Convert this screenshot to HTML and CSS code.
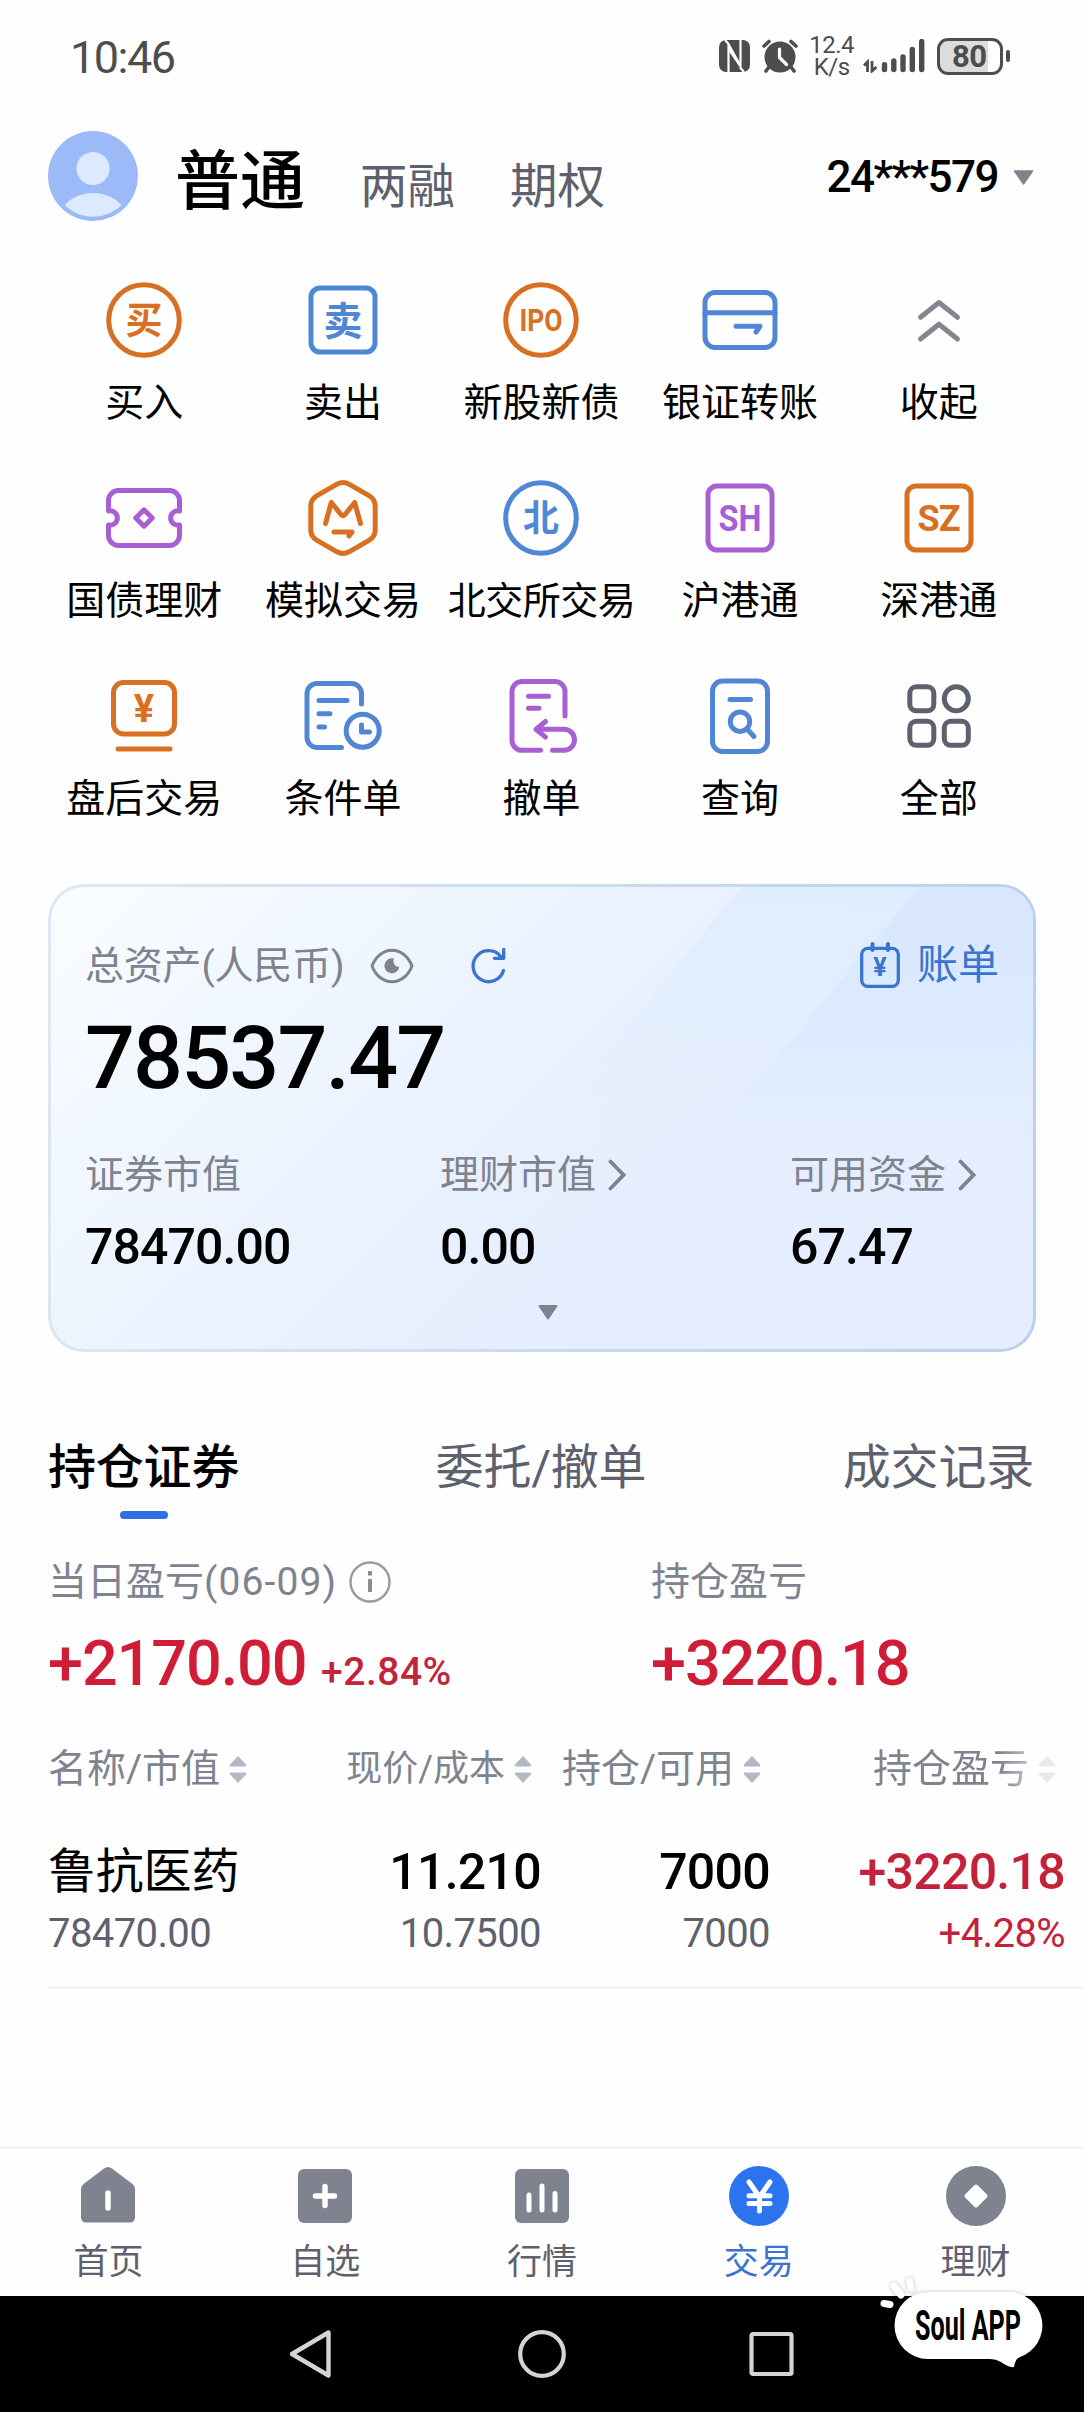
FILE: index.html
```html
<!DOCTYPE html>
<html lang="zh-CN">
<head>
  <meta charset="UTF-8" />
  <meta name="viewport" content="width=device-width, initial-scale=1.0"/>
  <title>交易</title>
  <link rel="stylesheet" href="styles.css">
</head>
<body>

  <div class="status-bar">
    <div class="clock">10:46</div>
    <div class="status-icons">
      <svg class="nfc" width="31" height="32" viewBox="0 0 31 32">
        <rect width="31" height="32" rx="7" fill="#4d4d4d"/>
        <path d="M9.500 32V4L21.500 26V9M6 0L10 4.500M21.500 0V28L25 32" fill="none" stroke="#fff" stroke-width="2.200"/>
        <path d="M10 9L21 25" stroke="#fff" stroke-width="3"/>
      </svg>
      <svg class="alarm" width="36" height="34" viewBox="0 0 36 34">
        <circle cx="18" cy="18" r="15.500" fill="#4d4d4d"/>
        <path d="M2 7L7 2.500M34 7L29 2.500M7 28L4 32M29 28L32 32" stroke="#4d4d4d" stroke-width="3.600" stroke-linecap="round"/>
        <path d="M17.500 10V18.500L24.500 25.500" fill="none" stroke="#fff" stroke-width="3.200" stroke-linecap="round"/>
      </svg>
      <div class="speed"><span>12.4</span><span>K/s</span></div>
      <svg class="signal" width="62" height="34" viewBox="0 0 62 34">
        <path d="M1 26.500L4.500 23V33M9 22V32L13.500 28" fill="none" stroke="#4d4d4d" stroke-width="2.800"/>
        <path d="M21.500 25.800V30.500M30.800 22V30.500M40 18V30.500M49.300 10.500V30.500M58.700 2.500V30.500" stroke="#4d4d4d" stroke-width="5.400" stroke-linecap="round"/>
      </svg>
      <div class="battery"><span>80</span></div>
      <div class="battery-tip"></div>
    </div>
  </div>

  <div class="header">
    <svg class="avatar" width="90" height="90" viewBox="0 0 90 90">
      <circle cx="45" cy="45" r="45" fill="#9bbaf7"/>
      <circle cx="45" cy="37.500" r="16.600" fill="#dce9fe"/>
      <path d="M16.500 74C31 58 59 58 73.500 74C58 89.500 32 89.500 16.500 74Z" fill="#dce9fe"/>
    </svg>
    <div class="account-type active">普通</div>
    <div class="account-type">两融</div>
    <div class="account-type">期权</div>
    <div class="account-no">24***579
      <svg width="21" height="15" viewBox="0 0 21 15"><path d="M1.500 1H19.500L10.500 14Z" fill="#7f8390" stroke="#7f8390" stroke-width="1.500" stroke-linejoin="round"/></svg>
    </div>
  </div>

  <div class="menu">
    <div class="menu-item">
      <svg class="icon orange" viewBox="0 0 80 80"><circle cx="40" cy="40" r="35.300"/><text x="40" y="54" font-size="37">买</text></svg>
      <span>买入</span>
    </div>
    <div class="menu-item">
      <svg class="icon blue" viewBox="0 0 80 80"><rect x="8" y="8" width="64" height="64" rx="9"/><text x="40" y="55" font-size="39">卖</text></svg>
      <span>卖出</span>
    </div>
    <div class="menu-item">
      <svg class="icon orange" viewBox="0 0 80 80"><circle cx="40" cy="40" r="35.300"/><text x="40" y="51" font-size="31" textLength="43" lengthAdjust="spacingAndGlyphs">IPO</text></svg>
      <span>新股新债</span>
    </div>
    <div class="menu-item">
      <svg class="icon blue" viewBox="0 0 80 80"><rect x="5" y="12.500" width="70" height="55" rx="10"/><path d="M5 32.700H75M36 46.300H60L56 52"/></svg>
      <span>银证转账</span>
    </div>
    <div class="menu-item">
      <svg class="icon gray" viewBox="0 0 80 80"><path d="M21.500 37.300L40 22.500L58.500 37.300M21.500 59L40 44.200L58.500 59"/></svg>
      <span>收起</span>
    </div>

    <div class="menu-item">
      <svg class="icon purple" viewBox="0 0 80 80"><path d="M4.500 33V22.500a10 10 0 0 1 10-10h51a10 10 0 0 1 10 10V33a7.200 7.200 0 1 0 0 14V57.500a10 10 0 0 1-10 10h-51a10 10 0 0 1-10-10V47a7.200 7.200 0 1 0 0-14ZM40 31.800L48.200 40L40 48.200L31.800 40Z"/></svg>
      <span>国债理财</span>
    </div>
    <div class="menu-item">
      <svg class="icon orange" viewBox="0 0 80 80"><path d="M34 6.200Q40 3 46 6.200L66 17.600Q72.200 21.300 72.200 28V52Q72.200 58.700 66 62.400L46 73.800Q40 77 34 73.800L14 62.400Q7.800 58.700 7.800 52V28Q7.800 21.300 14 17.600ZM22.500 45.500L28.300 24.500L38 36.500Q40 38.500 42 36.500L51.700 24.500L57.500 45.500M31 54H49L46 58"/></svg>
      <span>模拟交易</span>
    </div>
    <div class="menu-item">
      <svg class="icon blue" viewBox="0 0 80 80"><circle cx="40" cy="40" r="35.300"/><text x="40" y="53" font-size="36">北</text></svg>
      <span class="tight">北交所交易</span>
    </div>
    <div class="menu-item">
      <svg class="icon purple" viewBox="0 0 80 80"><rect x="8" y="8" width="64" height="64" rx="9"/><text x="40" y="53" font-size="36" textLength="43" lengthAdjust="spacingAndGlyphs">SH</text></svg>
      <span>沪港通</span>
    </div>
    <div class="menu-item">
      <svg class="icon orange" viewBox="0 0 80 80"><rect x="8" y="8" width="64" height="64" rx="9"/><text x="40" y="53" font-size="36" textLength="43">SZ</text></svg>
      <span>深港通</span>
    </div>

    <div class="menu-item">
      <svg class="icon orange" viewBox="0 0 80 80"><rect x="9.500" y="6.500" width="61" height="51.500" rx="10"/><path d="M14 73H66"/><text x="40" y="46" font-size="38">¥</text></svg>
      <span>盘后交易</span>
    </div>
    <div class="menu-item">
      <svg class="icon blue" viewBox="0 0 80 80"><path d="M38.500 71.500H14a10 10 0 0 1-10-10V17.500a10 10 0 0 1 10-10H48.500a10 10 0 0 1 10 10V28M16 24.500H44M16 37.700H27M16 51H21.500M58.500 49V56H66.500"/><circle cx="59.700" cy="54.700" r="16.500"/></svg>
      <span>条件单</span>
    </div>
    <div class="menu-item">
      <svg class="icon purple" viewBox="0 0 80 80"><path d="M39.500 74.300H21a10 10 0 0 1-10-10V15.500a10 10 0 0 1 10-10H54a10 10 0 0 1 10 10V40M27.500 20.300H47.500M27.500 32.300H38M44.500 45.500L35 53.300L44.500 61.200M35 53.300H63a10.500 10.500 0 0 1 0 21H51.500"/></svg>
      <span>撤单</span>
    </div>
    <div class="menu-item">
      <svg class="icon blue" viewBox="0 0 80 80"><rect x="12.500" y="5" width="55" height="70.500" rx="10"/><path d="M30 23.500H50.500M47 53L54 60.500"/><circle cx="40" cy="45.700" r="9.700"/></svg>
      <span>查询</span>
    </div>
    <div class="menu-item">
      <svg class="icon dark" viewBox="0 0 80 80"><rect x="10.800" y="10.800" width="24" height="24" rx="6.500"/><circle cx="57.300" cy="22.800" r="12"/><rect x="10.800" y="45.300" width="24" height="24" rx="6.500"/><rect x="45.300" y="45.300" width="24" height="24" rx="6.500"/></svg>
      <span>全部</span>
    </div>
  </div>

  <div class="asset-card">
    <div class="asset-top">
      <span class="label">总资产(人民币)</span>
      <svg class="eye" width="44" height="36" viewBox="0 0 44 36">
        <path d="M2 18C10 -3 34 -3 42 18C34 39 10 39 2 18Z" fill="none" stroke="#7f8390" stroke-width="3"/>
        <path d="M24 10.500A7.500 7.500 0 1 0 29.300 19A6 6 0 0 1 24 10.500Z" fill="#7f8390"/>
      </svg>
      <svg class="refresh" width="35" height="36" viewBox="0 0 35 36">
        <path d="M32.500 22.500A15.500 15.500 0 1 1 30.500 9.500M32.700 1.500V10.300H23.500" fill="none" stroke="#3a74cf" stroke-width="3.300" stroke-linecap="round" stroke-linejoin="round"/>
      </svg>
      <div class="bill">
        <svg width="40" height="46" viewBox="0 0 40 46">
          <path d="M12.500 2V8M28 2V8" stroke="#3a74cf" stroke-width="4" stroke-linecap="round"/>
          <rect x="1.700" y="6.300" width="36.600" height="38" rx="6" fill="none" stroke="#3a74cf" stroke-width="3.300"/>
          <text x="20" y="33.500" font-size="25" fill="#2f6cd6">¥</text>
        </svg>
        账单
      </div>
    </div>
    <div class="asset-total">78537.47</div>
    <div class="asset-cols">
      <div class="asset-col">
        <div class="label">证券市值</div>
        <div class="value">78470.00</div>
      </div>
      <div class="asset-col">
        <div class="label">理财市值 <svg width="18" height="32" viewBox="0 0 18 32"><path d="M2.500 2.500L15.500 16L2.500 29.500" fill="none" stroke="#7f8390" stroke-width="3.800" stroke-linecap="round"/></svg></div>
        <div class="value">0.00</div>
      </div>
      <div class="asset-col">
        <div class="label">可用资金 <svg width="18" height="32" viewBox="0 0 18 32"><path d="M2.500 2.500L15.500 16L2.500 29.500" fill="none" stroke="#7f8390" stroke-width="3.800" stroke-linecap="round"/></svg></div>
        <div class="value">67.47</div>
      </div>
    </div>
    <svg class="expand" width="20" height="15" viewBox="0 0 20 15"><path d="M1.500 1H18.500L10 13.500Z" fill="#7f8390" stroke="#7f8390" stroke-width="2" stroke-linejoin="round"/></svg>
  </div>

  <div class="tabs">
    <div class="tab active">持仓证券</div>
    <div class="tab">委托/撤单</div>
    <div class="tab">成交记录</div>
  </div>

  <div class="profit">
    <div class="profit-col">
      <div class="label"><span>当日盈亏<span class="date">(06-09)</span></span>
        <svg width="42" height="42" viewBox="0 0 42 42"><circle cx="21" cy="21" r="19.500" fill="none" stroke="#9a9a9e" stroke-width="2.400"/><path d="M21 10V14.500M21 18V31" stroke="#8a8d96" stroke-width="4"/></svg>
      </div>
      <div class="amount">+2170.00 <small>+2.84%</small></div>
    </div>
    <div class="profit-col">
      <div class="label">持仓盈亏</div>
      <div class="amount">+3220.18</div>
    </div>
  </div>

  <div class="holdings">
    <div class="holdings-head">
      <div>名称/市值<svg class="sort" viewBox="0 0 18 29"><path d="M9 1L17 9.500Q18 11.500 16 11.500H2Q0 11.500 1 9.500ZM9 28L17 19.500Q18 17.500 16 17.500H2Q0 17.500 1 19.500Z"/></svg></div>
      <div class="small">现价/成本<svg class="sort" viewBox="0 0 18 29"><path d="M9 1L17 9.500Q18 11.500 16 11.500H2Q0 11.500 1 9.500ZM9 28L17 19.500Q18 17.500 16 17.500H2Q0 17.500 1 19.500Z"/></svg></div>
      <div>持仓/可用<svg class="sort" viewBox="0 0 18 29"><path d="M9 1L17 9.500Q18 11.500 16 11.500H2Q0 11.500 1 9.500ZM9 28L17 19.500Q18 17.500 16 17.500H2Q0 17.500 1 19.500Z"/></svg></div>
      <div class="fade">持仓盈亏<svg class="sort" viewBox="0 0 18 29"><path d="M9 1L17 9.500Q18 11.500 16 11.500H2Q0 11.500 1 9.500ZM9 28L17 19.500Q18 17.500 16 17.500H2Q0 17.500 1 19.500Z"/></svg></div>
    </div>
    <div class="holdings-row">
      <div><p class="name">鲁抗医药</p><p class="sub">78470.00</p></div>
      <div><p>11.210</p><p class="sub">10.7500</p></div>
      <div><p>7000</p><p class="sub">7000</p></div>
      <div class="up"><p>+3220.18</p><p class="sub">+4.28%</p></div>
    </div>
  </div>

  <div class="tab-bar">
    <div class="tab-bar-item">
      <svg viewBox="0 0 60 60"><path d="M26 2.500Q30 -0.500 34 2.500L54.500 18Q57 20 57 23V51Q57 56.500 51.500 56.500H8.500Q3 56.500 3 51V23Q3 20 5.500 18Z" fill="#7f8390"/><path d="M30 27V42" stroke="#fff" stroke-width="5.500" stroke-linecap="round"/></svg>
      <span>首页</span>
    </div>
    <div class="tab-bar-item">
      <svg viewBox="0 0 60 60"><rect x="3" y="3" width="54" height="54" rx="6" fill="#7f8390"/><path d="M30 20.500V39.500M20.500 30H39.500" stroke="#fff" stroke-width="5.500" stroke-linecap="round"/></svg>
      <span>自选</span>
    </div>
    <div class="tab-bar-item">
      <svg viewBox="0 0 60 60"><rect x="3" y="3" width="54" height="54" rx="6" fill="#7f8390"/><path d="M17 29V44M30 20V44M43 27.500V44" stroke="#fff" stroke-width="5" stroke-linecap="round"/></svg>
      <span>行情</span>
    </div>
    <div class="tab-bar-item active">
      <svg viewBox="0 0 60 60"><circle cx="30" cy="30" r="30" fill="#2c74ee"/><path d="M20 16L30.500 31L41 16M30.500 31V45M20 29.700H41M20 37.500H41" fill="none" stroke="#fff" stroke-width="5" stroke-linecap="round" stroke-linejoin="round"/></svg>
      <span>交易</span>
    </div>
    <div class="tab-bar-item">
      <svg viewBox="0 0 60 60"><circle cx="30" cy="30" r="30" fill="#7f8390"/><path d="M30 20.500L39.500 30L30 39.500L20.500 30Z" fill="#fff" stroke="#fff" stroke-width="4" stroke-linejoin="round"/></svg>
      <span>理财</span>
    </div>
  </div>

  <div class="nav-bar">
    <svg width="48" height="52" viewBox="0 0 48 52"><path d="M41.500 4.500V47.500L5 26Z" fill="none" stroke="#d4d4d4" stroke-width="4.400" stroke-linejoin="round"/></svg>
    <svg width="52" height="52" viewBox="0 0 52 52"><circle cx="26" cy="26" r="21.800" fill="none" stroke="#d4d4d4" stroke-width="4.200"/></svg>
    <svg width="48" height="52" viewBox="0 0 48 52"><rect x="2.500" y="6" width="40" height="40" rx="1.500" fill="none" stroke="#d4d4d4" stroke-width="4.200"/></svg>
    <svg class="watermark" width="180" height="110" viewBox="0 0 180 110">
      <g filter="drop-shadow(0 0 2px rgba(0, 0, 0, 0.25))">
        <path d="M54 22H135A33.500 33.500 0 0 1 146 87.100Q141 89 140 97Q135 98 127 92Q122 89 116 89H54A33.500 33.500 0 0 1 54 22Z" fill="#fff"/>
        <path d="M10 33.500L16 34.500M20 16L27 25M35.500 11.500L37 18" stroke="#fff" stroke-width="7" stroke-linecap="round"/>
      </g>
      <text x="41" y="70" font-size="42" font-weight="700" textLength="106" lengthAdjust="spacingAndGlyphs">Soul APP</text>
    </svg>
  </div>

</body>
</html>
```
FILE: styles.css
```css
* {
  box-sizing: border-box;
  margin: 0;
  padding: 0;
}

body {
  font-family: Roboto, 'Noto Sans CJK SC', sans-serif;
  background: #fefefe;
  color: #000;
  width: 1084px;
  height: 2412px;
  display: flex;
  flex-direction: column;
  overflow: hidden;
}

svg {
  display: block;
  flex: none;
}

/* status bar */
.status-bar {
  height: 131px;
  padding: 30px 74px 0 70px;
  display: flex;
  justify-content: space-between;
  align-items: flex-start;
  color: #4d4d4d;
}

.clock {
  font-size: 45px;
  line-height: 56px;
  letter-spacing: -1.5px;
}

.status-icons {
  height: 52px;
  display: flex;
  align-items: center;
}

.alarm {
  margin-left: 12px;
}

.speed {
  display: flex;
  flex-direction: column;
  align-items: center;
  margin: 0 9px 0 11px;
  font-size: 24px;
  line-height: 22px;
  letter-spacing: -0.5px;
}

.battery {
  width: 66px;
  height: 37px;
  margin-left: 12px;
  border: 3px solid #4d4d4d;
  border-radius: 11px;
  background: linear-gradient(to right, #dcdcdc 48px, #fff 48px);
  font-size: 31px;
  font-weight: 700;
  line-height: 32px;
  padding-left: 12px;
  letter-spacing: -0.5px;
}

.battery-tip {
  width: 4px;
  height: 12px;
  margin-left: 3px;
  border-radius: 2px;
  background: #4d4d4d;
}

/* account header */
.header {
  height: 90px;
  padding: 0 50px 0 48px;
  display: flex;
  align-items: center;
}

.account-type {
  margin: 22px 55px 0 0;
  font-size: 47.5px;
  line-height: 60px;
  color: #5d616e;
}

.account-type.active {
  margin: 12px 55px 0 37px;
  font-size: 65px;
  font-weight: 500;
  color: #000;
}

.account-no {
  display: flex;
  align-items: center;
  gap: 15px;
  margin: 2px 0 0 auto;
  font-size: 44px;
  font-weight: 500;
  letter-spacing: -1.5px;
}

/* function menu */
.menu {
  margin: 59px 46px 0 45px;
  display: grid;
  grid-template-columns: repeat(5, 1fr);
  row-gap: 53px;
}

.menu-item {
  display: flex;
  flex-direction: column;
  align-items: center;
  font-size: 39px;
  line-height: 44px;
  gap: 21px;
  white-space: nowrap;
}

.menu-item .tight {
  font-size: 38px;
  letter-spacing: -0.5px;
}

.icon {
  width: 80px;
  height: 80px;
  fill: none;
  stroke: currentColor;
  stroke-width: 5;
  stroke-linecap: round;
  stroke-linejoin: round;
}

.icon text,
.bill text {
  stroke: none;
  fill: currentColor;
  font-weight: 700;
  text-anchor: middle;
}

.orange {
  color: #d96f20;
}

.blue {
  color: #5087d5;
}

.purple {
  color: #a95fd4;
}

.gray {
  color: #83868f;
}

.dark {
  color: #5d616e;
}

/* asset card */
.asset-card {
  position: relative;
  height: 468px;
  margin: 63px 48px 0;
  padding: 57px 34px 0 34px;
  border: 3px solid transparent;
  border-radius: 36px;
  background:
    linear-gradient(135deg, #fafdff 0%, #eef5ff 30%, #e5eefe 62%, #e5eefe 100%) padding-box,
    linear-gradient(100deg, #dde8f5, #b8d0ef) border-box;
  overflow: hidden;
}

.asset-card::before,
.asset-card::after {
  content: '';
  position: absolute;
  top: 0;
  right: 0;
  width: 540px;
  height: 270px;
  background: linear-gradient(to bottom, #e0edff, rgba(229, 238, 254, 0));
  clip-path: polygon(46% 0, 100% 0, 100% 100%, 5% 100%);
}

.asset-card::after {
  background: linear-gradient(to bottom, #d8e7ff, rgba(229, 238, 254, 0));
  clip-path: polygon(79% 0, 100% 0, 100% 100%, 37% 100%);
}

.asset-card > * {
  position: relative;
  z-index: 1;
}

.label {
  font-size: 39px;
  line-height: 44px;
  color: #7f8390;
}

.asset-top {
  display: flex;
  align-items: center;
  height: 44px;
}

.asset-top .label {
  letter-spacing: -0.2px;
}

.eye {
  margin-left: 26px;
}

.refresh {
  margin-left: 57px;
}

.bill {
  display: flex;
  align-items: center;
  gap: 17px;
  margin: -3px 0 0 auto;
  font-size: 41px;
  line-height: 46px;
  color: #3a74cf;
}

.asset-total {
  margin-top: 22px;
  font-size: 88px;
  line-height: 96px;
  font-weight: 500;
  letter-spacing: -1.9px;
}

.asset-cols {
  display: grid;
  grid-template-columns: 355px 350px 1fr;
  margin-top: 47px;
}

.asset-col .label {
  display: flex;
  align-items: center;
  gap: 12px;
}

.asset-col .value {
  margin-top: 22px;
  font-size: 50px;
  line-height: 56px;
  font-weight: 500;
  letter-spacing: -0.9px;
}

.expand {
  margin: 30px auto 0 453px;
}

/* tabs */
.tabs {
  display: flex;
  justify-content: space-between;
  margin: 91px 50px 0 48px;
}

.tab {
  font-size: 48px;
  line-height: 50px;
  letter-spacing: -0.2px;
  color: #5d616e;
}

.tab.active {
  color: #000;
  font-weight: 500;
}

.tab.active::after {
  content: '';
  display: block;
  width: 48px;
  height: 8px;
  margin: 18px auto 0;
  border-radius: 4px;
  background: #2f70e2;
}

/* profit */
.profit {
  display: grid;
  grid-template-columns: 603px 1fr;
  margin: 41px 0 0 48px;
}

.profit .label {
  display: flex;
  align-items: center;
  gap: 12px;
}

.profit .date {
  letter-spacing: 1.1px;
}

.amount {
  margin-top: 28px;
  font-size: 63px;
  line-height: 64px;
  font-weight: 500;
  letter-spacing: -1.1px;
  color: #d01c36;
}

.amount small {
  font-size: 39px;
  letter-spacing: 0.5px;
  color: #c2243c;
}

/* holdings */
.holdings {
  margin: 42px 0 0 48px;
  border-bottom: 3px solid #f5f5f6;
}

.holdings-head,
.holdings-row {
  display: grid;
  grid-template-columns: 203px 290px 229px 295px;
}

.holdings-head div {
  display: flex;
  align-items: center;
  justify-content: flex-end;
  padding-right: 9px;
  font-size: 39px;
  line-height: 46px;
  color: #7f8390;
  white-space: nowrap;
}

.holdings-head div:first-child {
  justify-content: flex-start;
  padding: 0;
}

.holdings-head .small {
  font-size: 36px;
}

.holdings-head .fade {
  -webkit-mask-image: linear-gradient(to right, #000 78%, rgba(0, 0, 0, 0.3) 92%);
  mask-image: linear-gradient(to right, #000 78%, rgba(0, 0, 0, 0.3) 92%);
}

.sort {
  width: 18px;
  height: 29px;
  margin-left: 9px;
  fill: #b3b8c4;
}

.holdings-row {
  padding: 52px 0 30px;
  text-align: right;
  font-size: 50px;
  line-height: 56px;
  font-weight: 500;
  letter-spacing: -0.7px;
}

.holdings-row div:first-child {
  text-align: left;
}

.holdings-row .name {
  font-size: 48px;
  font-weight: 400;
  letter-spacing: -0.2px;
}

.holdings-row .sub {
  margin-top: 12px;
  font-size: 40px;
  line-height: 44px;
  font-weight: 400;
  letter-spacing: -0.6px;
  color: #5d616e;
}

.holdings-row .up,
.holdings-row .up .sub {
  color: #c4213a;
}

/* bottom tab bar */
.tab-bar {
  display: grid;
  grid-template-columns: repeat(5, 1fr);
  height: 150px;
  margin-top: auto;
  padding: 17px 0 0 0;
  border-top: 3px solid #f4f4f5;
}

.tab-bar-item {
  display: flex;
  flex-direction: column;
  align-items: center;
  font-size: 35px;
  line-height: 40px;
  gap: 17px;
  color: #5d616e;
}

.tab-bar-item svg {
  width: 60px;
  height: 60px;
}

.tab-bar-item.active {
  color: #3a74cf;
}

/* system navigation */
.nav-bar {
  position: relative;
  display: flex;
  justify-content: center;
  gap: 181px;
  height: 116px;
  padding-top: 32px;
  background: #000;
}

.watermark {
  position: absolute;
  top: -26px;
  right: 30px;
}
```
